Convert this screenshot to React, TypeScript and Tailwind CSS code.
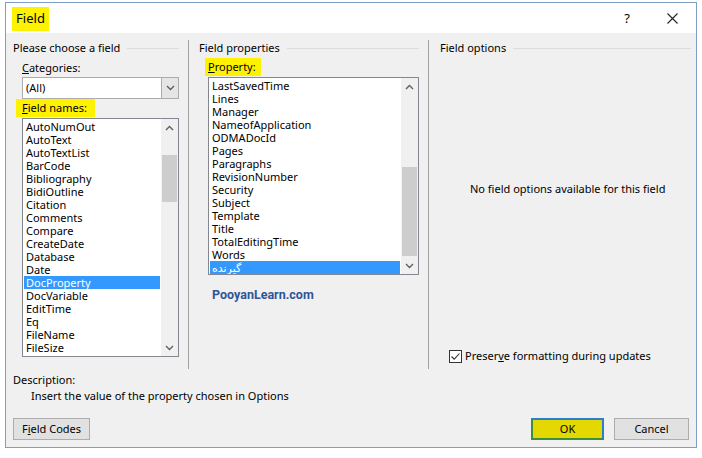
import React from 'react';

const fieldNames = [
  'AutoNumOut',
  'AutoText',
  'AutoTextList',
  'BarCode',
  'Bibliography',
  'BidiOutline',
  'Citation',
  'Comments',
  'Compare',
  'CreateDate',
  'Database',
  'Date',
  'DocProperty',
  'DocVariable',
  'EditTime',
  'Eq',
  'FileName',
  'FileSize',
];

const properties = [
  'LastSavedTime',
  'Lines',
  'Manager',
  'NameofApplication',
  'ODMADocId',
  'Pages',
  'Paragraphs',
  'RevisionNumber',
  'Security',
  'Subject',
  'Template',
  'Title',
  'TotalEditingTime',
  'Words',
  'گیرنده',
];

function Chevron({ up }: { up?: boolean }) {
  return (
    <svg width="9" height="6" viewBox="0 0 9 6">
      <path
        d={up ? 'M1 5 L4.5 1.5 L8 5' : 'M1 1 L4.5 4.5 L8 1'}
        fill="none"
        stroke="#606060"
        strokeWidth="1.4"
      />
    </svg>
  );
}

function Scrollbar({ thumbTop, thumbHeight }: { thumbTop: number; thumbHeight: number }) {
  return (
    <div className="w-[17px] bg-[#f0f0f0] flex flex-col">
      <div className="h-[17px] flex items-center justify-center">
        <Chevron up />
      </div>
      <div className="flex-1">
        <div className="mx-[1px] bg-[#cdcdcd]" style={{ marginTop: thumbTop, height: thumbHeight }} />
      </div>
      <div className="h-[17px] flex items-center justify-center">
        <Chevron />
      </div>
    </div>
  );
}

function ListBox({
  items,
  selected,
  className,
  thumbTop,
  thumbHeight,
}: {
  items: string[];
  selected: string;
  className: string;
  thumbTop: number;
  thumbHeight: number;
}) {
  return (
    <div className={`border border-[#828790] bg-white flex ${className}`}>
      <div className="flex-1 p-[1px] overflow-hidden">
        {items.map((item) => (
          <div
            key={item}
            className={`h-[13px] leading-[13px] pl-[2px] whitespace-nowrap ${
              item === selected ? 'bg-[#3399ff] text-white' : ''
            }`}
          >
            {item}
          </div>
        ))}
      </div>
      <Scrollbar thumbTop={thumbTop} thumbHeight={thumbHeight} />
    </div>
  );
}

function GroupHeader({ title }: { title: string }) {
  return (
    <div className="h-[16px] flex items-center">
      <span className="leading-[16px]">{title}</span>
      <div className="flex-1 h-px bg-[#dcdcdc] ml-[7px]" />
    </div>
  );
}

export default function App() {
  return (
    <div
      className="w-[702px] h-[458px] bg-white pl-[5px] pt-[2px] text-[11px] text-black"
      style={{ fontFamily: '"Noto Sans", "DejaVu Sans", sans-serif' }}
    >
      <div className="w-[692px] h-[446px] border border-[#7d9fc6] flex flex-col">
        {/* Title bar */}
        <div className="h-[30px] bg-white flex items-start">
          <div className="ml-[6px] mt-[4px] w-[37px] h-[24px] bg-[#fff200] flex items-center justify-center text-[13px]">
            Field
          </div>
          <div className="ml-auto mt-[6px] text-[13px] w-[20px] text-center">?</div>
          <div className="ml-[30px] mr-[18px] mt-[10px]">
            <svg width="11" height="11" viewBox="0 0 11 11">
              <path d="M0.5 0.5 L10.5 10.5 M10.5 0.5 L0.5 10.5" stroke="#222" strokeWidth="1.1" />
            </svg>
          </div>
        </div>

        {/* Body */}
        <div className="flex-1 bg-[#f0f0f0] pl-[7px] pr-[5px] pt-[7px]">
          <div className="flex h-[329px]">
            {/* Please choose a field */}
            <div className="w-[176px] border-r border-[#a0a0a0] pr-[9px] flex flex-col">
              <GroupHeader title="Please choose a field" />
              <div className="mt-[4px] ml-[9px] h-[16px] leading-[16px]">
                <span className="underline">C</span>ategories:
              </div>
              <div className="mt-[1px] ml-[9px] w-[157px] h-[22px] border border-[#acacac] bg-white flex">
                <div className="flex-1 pl-[3px] leading-[20px]">(All)</div>
                <div className="w-[17px] bg-[#e5e5e5] border-l border-[#acacac] flex items-center justify-center">
                  <Chevron />
                </div>
              </div>
              <div className="ml-[3px] w-[79px] h-[18px] bg-[#fff200] pl-[6px] leading-[18px]">
                <span className="underline">F</span>ield names:
              </div>
              <ListBox
                items={fieldNames}
                selected="DocProperty"
                className="mt-[1px] ml-[9px] w-[157px] h-[239px]"
                thumbTop={19}
                thumbHeight={47}
              />
            </div>

            {/* Field properties */}
            <div className="w-[240px] border-r border-[#a0a0a0] pl-[10px] pr-[9px] flex flex-col">
              <GroupHeader title="Field properties" />
              <div className="mt-[2px] ml-[6px] w-[56px] h-[18px] bg-[#fff200] pl-[3px] leading-[18px]">
                <span className="underline">P</span>roperty:
              </div>
              <ListBox
                items={properties}
                selected="گیرنده"
                className="mt-[1px] ml-[9px] w-[211px] h-[198px]"
                thumbTop={72}
                thumbHeight={89}
              />
              <div
                className="mt-[12px] ml-[13px] h-[16px] leading-[16px] font-bold text-[12.5px] text-[#2f5597]"
                style={{ fontFamily: 'Roboto, "Noto Sans", sans-serif' }}
              >
                PooyanLearn.com
              </div>
            </div>

            {/* Field options */}
            <div className="flex-1 pl-[11px] flex flex-col">
              <GroupHeader title="Field options" />
              <div className="mt-[125px] ml-[30px] h-[16px] leading-[16px]">
                No field options available for this field
              </div>
              <div className="mt-[151px] ml-[9px] h-[16px] flex items-center">
                <div className="w-[13px] h-[13px] border border-[#333] bg-white flex items-center justify-center">
                  <svg width="11" height="11" viewBox="0 0 11 11">
                    <path d="M1.5 5.5 L4.2 8.2 L9.5 2.5" fill="none" stroke="#333" strokeWidth="1.1" />
                  </svg>
                </div>
                <span className="ml-[3px]">
                  Preser<span className="underline">v</span>e formatting during updates
                </span>
              </div>
            </div>
          </div>

          {/* Description */}
          <div className="mt-[3px] h-[16px] leading-[16px]">Description:</div>
          <div className="ml-[18px] h-[16px] leading-[16px]">
            Insert the value of the property chosen in Options
          </div>

          {/* Buttons */}
          <div className="mt-[14px] flex pr-[2px]">
            <button className="w-[77px] h-[22px] bg-[#e1e1e1] border border-[#adadad] leading-[20px]">
              F<span className="underline">i</span>eld Codes
            </button>
            <button className="ml-auto w-[73px] h-[22px] bg-[#e3d800] border-2 border-t-[#2a7fd0] border-r-[#2a7fd0] border-l-[#3f8f3a] border-b-[#3f8f3a] leading-[18px]">
              OK
            </button>
            <button className="ml-[10px] w-[75px] h-[22px] bg-[#e1e1e1] border border-[#adadad] leading-[20px]">
              Cancel
            </button>
          </div>
        </div>
      </div>
    </div>
  );
}
